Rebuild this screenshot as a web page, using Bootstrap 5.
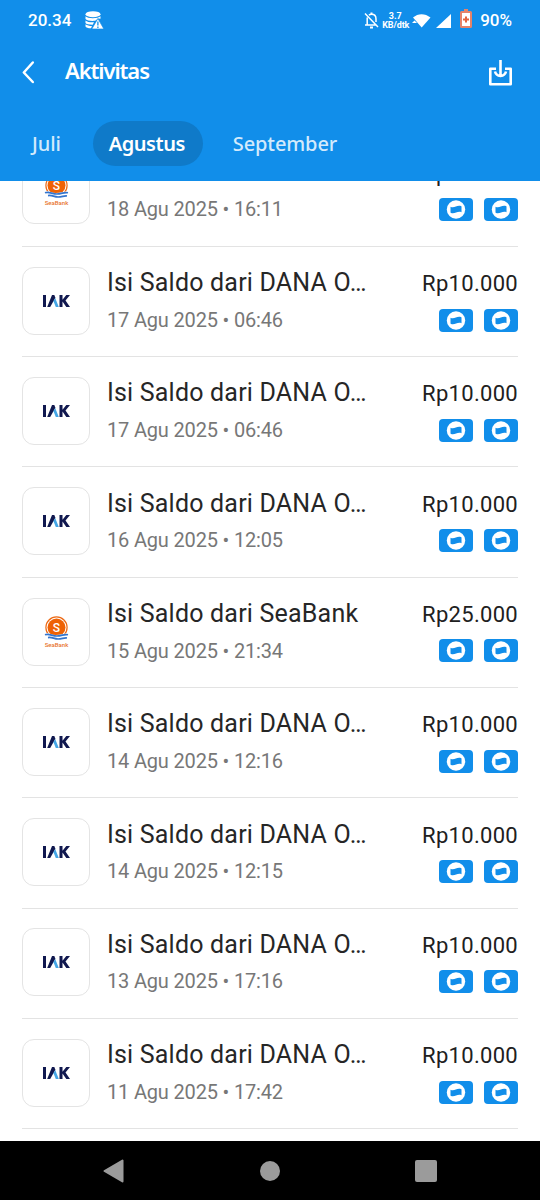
<!DOCTYPE html>
<html lang="id">
<head>
<meta charset="utf-8">
<meta name="viewport" content="width=device-width, initial-scale=1">
<title>Aktivitas</title>
<link href="https://cdn.jsdelivr.net/npm/bootstrap@5.3.0/dist/css/bootstrap.min.css" rel="stylesheet">
<style>
  body { font-family: Roboto, "Liberation Sans", sans-serif; color: #262626; background: #fff; }
  svg { display: block; flex: none; }
  .screen { width: 540px; height: 1200px; }
  .app-header { height: 181px; background: #118eea; }
  .status-bar { height: 40px; padding: 1px 28px 0 28px; font-size: 17px; font-weight: 500; }
  .clock { width: 44px; }
  .net-speed { width: 26px; font-size: 9px; line-height: 9px; font-weight: 700; white-space: nowrap; letter-spacing: -.1px; }
  .title-bar { height: 63px; padding: 0 27px 0 21px; }
  .title-bar h1 { font: 600 22px/30px "Noto Sans", sans-serif; letter-spacing: -1.1px; margin-top: -3px; }
  .months { height: 78px; padding: 18px 0 0 16px; font: 500 20px/30px "Noto Sans", sans-serif; }
  .months .nav-link { height: 45px; padding: 8px 16px; border-radius: 23px; color: #d3eafc; white-space: nowrap; letter-spacing: -.1px; }
  .months .nav-link.active { width: 110px; background: #0f7ac9; color: #fff; font-weight: 600; letter-spacing: -.45px; }
  .activity { min-height: 0; padding: 0 22px; }
  .activity li { height: 110.3px; padding-top: 20.3px; border-bottom: 1.5px solid #e3e3e3; flex: none; }
  .activity li:first-child { margin-top: -44.5px; }
  .logo-box { width: 68px; height: 68px; border: 1.3px solid #e4e4e4; border-radius: 12px; margin-right: 17px; margin-top: -.4px; }
  .entry-title { font-size: 25px; line-height: 32px; letter-spacing: .2px; }
  .entry-date { font-size: 20px; line-height: 26px; margin-top: 7.6px; color: #777; letter-spacing: -.17px; }
  .amount { font-size: 22px; line-height: 30px; margin-top: 2px; color: #202020; letter-spacing: .3px; }
  .methods { margin-top: 9.500px; }
  .nav-keys { height: 59px; background: #000; padding: 0 103px; }
</style>
</head>
<body>
<svg width="0" height="0" class="position-absolute" aria-hidden="true">
  <symbol id="iak" viewBox="0 0 28 14">
    <path d="M1 1h3v12H1zM17.5 1h3v4.7L24.3 1H28l-4.5 5.5L28 13h-3.7l-3.8-5.4V13h-3z" fill="#10184f"/>
    <path d="M5.2 13 10 1h2.3l1.1 2.8L8.2 13z" fill="#10184f"/>
    <path d="M11.5 7.2 13.2 4l3.6 9h-3z" fill="#45a7e6"/>
  </symbol>
  <symbol id="sea" viewBox="0 0 26 32">
    <circle cx="13.500" cy="11.5" r="10.6" fill="none" stroke="#ed6b17" stroke-width="1.2"/>
    <circle cx="13.500" cy="11.5" r="9" fill="#ee6205"/>
    <path d="M0 17.5c5-2 8 1.5 13 1.5s8-2.5 13-1v6c-5 .5-8 1-13-1-4-1.400-8-2-13-1z" fill="#fff"/>
    <path d="M2 18.800c4-1.500 7 1.200 12 1.200s7-2.200 11-1.200M5 21.600c4-.8 6 1.400 10 1.400s6-1.400 9-1" fill="none" stroke="#3475ce" stroke-width="1.700"/>
    <text x="13.500" y="15.500" text-anchor="middle" font-family="Roboto" font-size="12" font-weight="500" fill="#fff">S</text>
    <text x="13.500" y="30.500" text-anchor="middle" font-family="Roboto" font-size="6" font-weight="500" fill="#e8742c" textLength="23.500" lengthAdjust="spacingAndGlyphs">SeaBank</text>
  </symbol>
  <symbol id="pay" viewBox="0 0 79 23">
    <rect width="34" height="23" rx="4" fill="#118eea"/><rect x="45" width="34" height="23" rx="4" fill="#118eea"/>
    <circle cx="17" cy="11.500" r="9.200" fill="#fff"/><circle cx="62" cy="11.500" r="9.200" fill="#fff"/>
    <path id="flag" d="M11.500 8.700c4 1.800 6-2 10.400-.8q.6.200.6.700v5.600c-4-1.500-6.600 2-10.400.8q-.6-.2-.6-.7z" fill="#118eea"/>
    <use href="#flag" x="45"/>
  </symbol>
</svg>

<div class="screen d-flex flex-column overflow-hidden">
  <header class="app-header text-white flex-shrink-0">
    <div class="status-bar d-flex align-items-center">
      <span class="clock">20.34</span>
      <svg style="margin-left:13px" width="19" height="19" viewBox="0 0 19 19" fill="#fff">
        <ellipse cx="8" cy="3.200" rx="7.500" ry="3"/>
        <path d="M.5 5.200c2 2.600 12.500 2.600 15 0v2.500l-2-.3-3.400 2.400C6 10.300 1.500 9.500.5 8zM.5 9.500c1.500 1.500 5 2 8.500 1.800l-1.300 2.400C4 13.700 1 13 .5 12zM.5 13.300c1.500 1.300 4 1.700 6.500 1.800l-1 2.200C3 17.300 1 16.700.5 15.500z"/>
        <path d="m12.900 7.500 6 10.500H6.800z" stroke="#118eea" stroke-width=".7"/>
        <path d="M12.900 10.500v4M12.900 15.500v1.400" stroke="#118eea" stroke-width="1.300"/>
      </svg>
      <svg class="ms-auto" width="15" height="17" viewBox="0 0 15 17" fill="none" stroke="#fff" stroke-width="1.500">
        <path d="M1 1.500 14 15M3.200 5.500v7.200M1 13h11M12 10V7c0-3-2-4.700-4.500-4.700-1 0-1.900.3-2.600.8"/><path d="M7.500.5v2M6 15.400h3" stroke-width="2"/>
      </svg>
      <span class="net-speed text-center" style="margin-left:3px">3.7<br>KB/dtk</span>
      <svg style="margin-left:4px" width="19" height="15" viewBox="0 0 19 15"><path d="M1 4.500C6 0 13 0 18.500 4.500L9.700 14.500z" fill="#fff"/><path d="m0 10 2.500-2.500L5 10z" fill="#fff"/></svg>
      <svg style="margin-left:5px" width="15" height="14" viewBox="0 0 15 14"><path d="M15 0v14H0z" fill="#fff"/></svg>
      <svg class="mb-1" style="margin-left:9px" width="12" height="19" viewBox="0 0 12 19"><path d="M4 0h4v2h2.500Q12 2 12 3.500v14q0 1.500-1.500 1.500h-9Q0 19 0 17.500v-14Q0 2 1.500 2H4z" fill="#e5836a"/><path d="M2 4h8v13H2z" fill="#fff"/><path d="M6 7.500v6M3 10.500h6" stroke="#e46440" stroke-width="2"/></svg>
      <span style="margin-left:8px">90%</span>
    </div>
    <div class="title-bar d-flex align-items-center">
      <svg width="16" height="24" viewBox="0 0 16 24" fill="none" stroke="#fff" stroke-width="2.500" stroke-linecap="round" stroke-linejoin="round"><path d="M11.800 2.500 2.800 12.500l9 9.500"/></svg>
      <h1 class="mb-0 ms-4 ps-1">Aktivitas</h1>
      <svg class="ms-auto mt-1" width="25" height="28" viewBox="0 0 25 28" fill="none" stroke="#fff" stroke-width="2.600" stroke-linejoin="round"><path d="M8 8.700H2.300v15.500h20.400V8.700H17" /><path d="M12.500 0v15.500M7 11.500q1 4 5.500 4.500Q17 15.500 18 11.500"/></svg>
    </div>
    <nav class="months nav flex-nowrap">
      <a class="nav-link" href="#">Juli</a>
      <a class="nav-link active" href="#" style="margin-left:16px">Agustus</a>
      <a class="nav-link" href="#" style="margin-left:14px">September</a>
    </nav>
  </header>

  <ul class="activity list-unstyled mb-0 flex-grow-1 d-flex flex-column overflow-hidden">
    <li class="d-flex">
      <div class="logo-box d-flex align-items-center justify-content-center"><svg width="26" height="32"><use href="#sea"/></svg></div>
      <div><div class="entry-title">Isi Saldo dari SeaBank</div><div class="entry-date">18 Agu 2025 • 16:11</div></div>
      <div class="ms-auto d-flex flex-column align-items-end"><div class="amount">Rp25.000</div><svg class="methods" width="79" height="23"><use href="#pay"/></svg></div>
    </li>
    <li class="d-flex">
      <div class="logo-box d-flex align-items-center justify-content-center"><svg width="28" height="14"><use href="#iak"/></svg></div>
      <div><div class="entry-title">Isi Saldo dari DANA O…</div><div class="entry-date">17 Agu 2025 • 06:46</div></div>
      <div class="ms-auto d-flex flex-column align-items-end"><div class="amount">Rp10.000</div><svg class="methods" width="79" height="23"><use href="#pay"/></svg></div>
    </li>
    <li class="d-flex">
      <div class="logo-box d-flex align-items-center justify-content-center"><svg width="28" height="14"><use href="#iak"/></svg></div>
      <div><div class="entry-title">Isi Saldo dari DANA O…</div><div class="entry-date">17 Agu 2025 • 06:46</div></div>
      <div class="ms-auto d-flex flex-column align-items-end"><div class="amount">Rp10.000</div><svg class="methods" width="79" height="23"><use href="#pay"/></svg></div>
    </li>
    <li class="d-flex">
      <div class="logo-box d-flex align-items-center justify-content-center"><svg width="28" height="14"><use href="#iak"/></svg></div>
      <div><div class="entry-title">Isi Saldo dari DANA O…</div><div class="entry-date">16 Agu 2025 • 12:05</div></div>
      <div class="ms-auto d-flex flex-column align-items-end"><div class="amount">Rp10.000</div><svg class="methods" width="79" height="23"><use href="#pay"/></svg></div>
    </li>
    <li class="d-flex">
      <div class="logo-box d-flex align-items-center justify-content-center"><svg width="26" height="32"><use href="#sea"/></svg></div>
      <div><div class="entry-title">Isi Saldo dari SeaBank</div><div class="entry-date">15 Agu 2025 • 21:34</div></div>
      <div class="ms-auto d-flex flex-column align-items-end"><div class="amount">Rp25.000</div><svg class="methods" width="79" height="23"><use href="#pay"/></svg></div>
    </li>
    <li class="d-flex">
      <div class="logo-box d-flex align-items-center justify-content-center"><svg width="28" height="14"><use href="#iak"/></svg></div>
      <div><div class="entry-title">Isi Saldo dari DANA O…</div><div class="entry-date">14 Agu 2025 • 12:16</div></div>
      <div class="ms-auto d-flex flex-column align-items-end"><div class="amount">Rp10.000</div><svg class="methods" width="79" height="23"><use href="#pay"/></svg></div>
    </li>
    <li class="d-flex">
      <div class="logo-box d-flex align-items-center justify-content-center"><svg width="28" height="14"><use href="#iak"/></svg></div>
      <div><div class="entry-title">Isi Saldo dari DANA O…</div><div class="entry-date">14 Agu 2025 • 12:15</div></div>
      <div class="ms-auto d-flex flex-column align-items-end"><div class="amount">Rp10.000</div><svg class="methods" width="79" height="23"><use href="#pay"/></svg></div>
    </li>
    <li class="d-flex">
      <div class="logo-box d-flex align-items-center justify-content-center"><svg width="28" height="14"><use href="#iak"/></svg></div>
      <div><div class="entry-title">Isi Saldo dari DANA O…</div><div class="entry-date">13 Agu 2025 • 17:16</div></div>
      <div class="ms-auto d-flex flex-column align-items-end"><div class="amount">Rp10.000</div><svg class="methods" width="79" height="23"><use href="#pay"/></svg></div>
    </li>
    <li class="d-flex">
      <div class="logo-box d-flex align-items-center justify-content-center"><svg width="28" height="14"><use href="#iak"/></svg></div>
      <div><div class="entry-title">Isi Saldo dari DANA O…</div><div class="entry-date">11 Agu 2025 • 17:42</div></div>
      <div class="ms-auto d-flex flex-column align-items-end"><div class="amount">Rp10.000</div><svg class="methods" width="79" height="23"><use href="#pay"/></svg></div>
    </li>
  </ul>

  <footer class="nav-keys d-flex align-items-center justify-content-between flex-shrink-0">
    <svg width="21" height="24" viewBox="0 0 21 24"><path d="M1.500 12 19.500 1.500v21z" fill="#9b9b9b" stroke="#9b9b9b" stroke-width="2" stroke-linejoin="round"/></svg>
    <svg width="20" height="20" viewBox="0 0 20 20"><circle cx="10" cy="10" r="10" fill="#9b9b9b"/></svg>
    <svg width="22" height="22" viewBox="0 0 22 22"><rect width="22" height="22" rx="2" fill="#9b9b9b"/></svg>
  </footer>
</div>
<script src="https://cdn.jsdelivr.net/npm/bootstrap@5.3.0/dist/js/bootstrap.bundle.min.js"></script>
</body>
</html>
